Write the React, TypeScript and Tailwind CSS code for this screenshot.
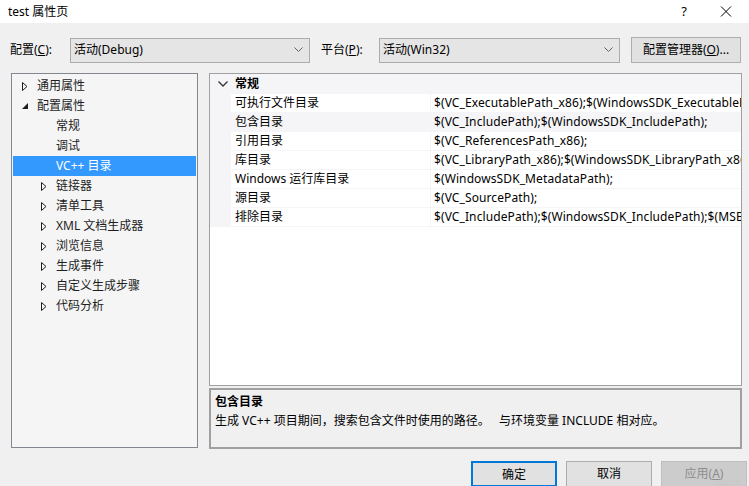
import type { ReactNode } from "react";

const font = { fontFamily: '"Noto Sans", "Noto Sans CJK SC", sans-serif' };

type TreeItem = { label: string; level: 0 | 1; mark: "closed" | "open" | "none"; selected?: boolean };

const treeItems: TreeItem[] = [
  { label: "通用属性", level: 0, mark: "closed" },
  { label: "配置属性", level: 0, mark: "open" },
  { label: "常规", level: 1, mark: "none" },
  { label: "调试", level: 1, mark: "none" },
  { label: "VC++ 目录", level: 1, mark: "none", selected: true },
  { label: "链接器", level: 1, mark: "closed" },
  { label: "清单工具", level: 1, mark: "closed" },
  { label: "XML 文档生成器", level: 1, mark: "closed" },
  { label: "浏览信息", level: 1, mark: "closed" },
  { label: "生成事件", level: 1, mark: "closed" },
  { label: "自定义生成步骤", level: 1, mark: "closed" },
  { label: "代码分析", level: 1, mark: "closed" },
];

const props: { name: string; value: string; active?: boolean }[] = [
  { name: "可执行文件目录", value: "$(VC_ExecutablePath_x86);$(WindowsSDK_ExecutablePath);$(VS_ExecutablePath)" },
  { name: "包含目录", value: "$(VC_IncludePath);$(WindowsSDK_IncludePath);", active: true },
  { name: "引用目录", value: "$(VC_ReferencesPath_x86);" },
  { name: "库目录", value: "$(VC_LibraryPath_x86);$(WindowsSDK_LibraryPath_x86);$(NETFXKitsDir)" },
  { name: "Windows 运行库目录", value: "$(WindowsSDK_MetadataPath);" },
  { name: "源目录", value: "$(VC_SourcePath);" },
  { name: "排除目录", value: "$(VC_IncludePath);$(WindowsSDK_IncludePath);$(MSBuild_ExecutablePath)" },
];

function Chevron() {
  return (
    <svg width="9" height="6" viewBox="0 0 9 6" className="shrink-0">
      <path d="M0.5 0.5 L4.5 4.5 L8.5 0.5" fill="none" stroke="#606060" strokeWidth="1" />
    </svg>
  );
}

function Combo({ text, width }: { text: string; width: string }) {
  return (
    <div className={`flex h-[25px] ${width} items-center justify-between border border-[#acacac] bg-[#e5e5e5] pl-[3px] pr-[6px] text-[12px] text-black`}>
      <span>{text}</span>
      <Chevron />
    </div>
  );
}

function TreeMark({ mark, selected }: { mark: TreeItem["mark"]; selected?: boolean }) {
  if (mark === "closed")
    return (
      <svg width="6" height="9" viewBox="0 0 6 9">
        <path d="M0.5 0.5 L5 4.5 L0.5 8.5 Z" fill="none" stroke={selected ? "#fff" : "#1e1e1e"} strokeWidth="1" />
      </svg>
    );
  if (mark === "open")
    return (
      <svg width="6" height="6" viewBox="0 0 6 6">
        <path d="M6 0 L6 6 L0 6 Z" fill="#1e1e1e" />
      </svg>
    );
  return null;
}

function Btn({ children, primary, disabled }: { children: ReactNode; primary?: boolean; disabled?: boolean }) {
  return (
    <div
      className={`flex h-[26px] w-[86px] items-start justify-center pt-[3px] text-[12px] ${
        primary
          ? "border-2 border-[#0078d7] bg-[#e1e1e1] text-black"
          : disabled
            ? "border border-[#bfbfbf] bg-[#cccccc] text-[#8d8d8d]"
            : "border border-[#adadad] bg-[#e1e1e1] text-black"
      }`}
    >
      {children}
    </div>
  );
}

export default function App() {
  return (
    <div className="relative h-[486px] w-[749px] overflow-hidden bg-[#f0f0f0]" style={font}>
      <div className="flex h-[23px] items-center justify-between bg-white pl-[8px] text-[12px] text-black">
        <span className="pt-[1px]">test 属性页</span>
        <div className="flex items-center">
          <span className="w-[50px] pl-[6px] text-center text-[13px]">?</span>
          <svg width="43" height="11" viewBox="0 0 43 11">
            <path d="M15 0.5 L25 10.5 M25 0.5 L15 10.5" stroke="#000" strokeWidth="1" />
          </svg>
        </div>
      </div>

      <div className="mt-[14px] flex h-[26px] items-center text-[12px] text-black">
        <span className="ml-[10px] w-[60px]">
          配置(<span className="underline">C</span>):
        </span>
        <Combo text="活动(Debug)" width="w-[240px]" />
        <span className="ml-[11px] w-[58px]">
          平台(<span className="underline">P</span>):
        </span>
        <Combo text="活动(Win32)" width="w-[241px]" />
        <div className="ml-[11px] flex h-[26px] w-[110px] items-center justify-center border border-[#adadad] bg-[#e1e1e1]">
          配置管理器(<span className="underline">O</span>)...
        </div>
      </div>

      <div className="mt-[10px] flex pl-[11px]">
        <div className="h-[375px] w-[187px] border border-[#828790] bg-[#f5f5f5] pt-[2px] text-[12px]">
          {treeItems.map((t) => (
            <div
              key={t.label}
              className={`mx-px flex h-[20px] items-center ${t.selected ? "bg-[#3399ff] text-white" : "text-[#1e1e1e]"}`}
            >
              <span className={`flex w-[10px] items-center ${t.level === 0 ? "ml-[9px]" : "ml-[28px]"}`}>
                <TreeMark mark={t.mark} selected={t.selected} />
              </span>
              <span className="ml-[5px]">{t.label}</span>
            </div>
          ))}
        </div>

        <div className="ml-[11px] flex w-[533px] flex-col">
          <div className="h-[313px] border border-[#a0a0a0] bg-white text-[12px] text-black">
            <div className="bg-[#f5f5f7]">
              <div className="flex h-[20px] items-center">
                <span className="ml-[8px] w-[14px]">
                  <svg width="10" height="6" viewBox="0 0 10 6">
                    <path d="M0.5 0.5 L5 5 L9.5 0.5" fill="none" stroke="#333" strokeWidth="1.3" />
                  </svg>
                </span>
                <span className="ml-[3px] font-bold">常规</span>
              </div>
              {props.map((p) => (
                <div key={p.name} className="flex h-[19px] pb-px pl-[21px]">
                  <div className={`w-[199px] overflow-hidden whitespace-nowrap pl-[4px] leading-[18px] ${p.active ? "bg-[#f5f5f7]" : "bg-white"}`}>
                    {p.name}
                  </div>
                  <div className={`ml-px flex-1 overflow-hidden whitespace-nowrap pl-[3px] leading-[18px] tracking-[0.1px] ${p.active ? "bg-[#f5f5f7]" : "bg-white"}`}>
                    {p.value}
                  </div>
                </div>
              ))}
            </div>
          </div>

          <div className="mt-[2px] h-[61px] border-2 border-[#a0a0a0] bg-[#f0f0f0] px-[4px] pt-[2px] text-[12px] text-black">
            <div className="font-bold leading-[19px]">包含目录</div>
            <div className="whitespace-pre leading-[19px]">
              {"生成 VC++ 项目期间，搜索包含文件时使用的路径。   与环境变量 INCLUDE 相对应。"}
            </div>
          </div>
        </div>
      </div>

      <div className="mt-[12px] flex gap-[9px] pl-[471px]">
        <Btn primary>确定</Btn>
        <Btn>取消</Btn>
        <Btn disabled>
          应用(<span className="underline">A</span>)
        </Btn>
      </div>

      <div className="absolute left-[716px] top-[477px] whitespace-nowrap text-[13px] text-[#c8c8c8]">激活</div>
    </div>
  );
}
